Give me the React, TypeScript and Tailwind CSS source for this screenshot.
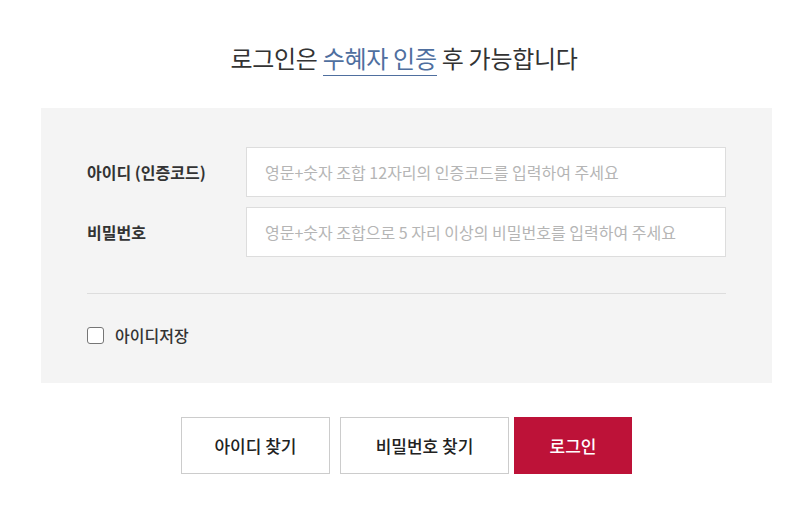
import React from 'react'

const font = { fontFamily: '"Noto Sans CJK KR", "Noto Sans", sans-serif' }

export default function App() {
  return (
    <div className="w-[808px] h-[511px] bg-white text-[#333]" style={font}>
      {/* Title */}
      <h1 className="pt-[40px] text-center text-[24px] font-normal leading-[36px] tracking-[-0.3px] text-[#333]">
        로그인은{' '}
        <span className="text-[#4f6f9f] border-b border-[#4f6f9f]">수혜자 인증</span>{' '}
        후 가능합니다
      </h1>

      {/* Form panel */}
      <div className="ml-[41px] mr-[36px] mt-[32px] h-[275px] bg-[#f4f4f4] px-[46px] pt-[39px]">
        <div className="flex flex-col gap-[10px]">
          <div className="flex items-center">
            <label className="w-[159px] text-[16px] font-bold text-[#333]">아이디 (인증코드)</label>
            <input
              className="h-[50px] flex-1 border border-[#dddddd] bg-white px-[18px] text-[16px] text-[#333] outline-none placeholder:text-[#b5b5b5]"
              placeholder="영문+숫자 조합 12자리의 인증코드를 입력하여 주세요"
            />
          </div>
          <div className="flex items-center">
            <label className="w-[159px] text-[16px] font-bold text-[#333]">비밀번호</label>
            <input
              type="password"
              className="h-[50px] flex-1 border border-[#dddddd] bg-white px-[18px] text-[16px] text-[#333] outline-none placeholder:text-[#b5b5b5]"
              placeholder="영문+숫자 조합으로 5 자리 이상의 비밀번호를 입력하여 주세요"
            />
          </div>
        </div>

        <div className="mt-[36px] border-t border-[#dddddd]" />

        <label className="mt-[29px] flex items-center gap-[11px]">
          <span className="h-[17px] w-[17px] rounded-[3px] border border-[#767676] bg-white" />
          <span className="text-[16px] font-medium text-[#333]">아이디저장</span>
        </label>
      </div>

      {/* Buttons */}
      <div className="mt-[34px] flex justify-center gap-[10px] pl-[5px]">
        <button className="h-[57px] w-[149px] border border-[#cccccc] bg-white text-[17px] font-medium text-[#222]">
          아이디 찾기
        </button>
        <button className="h-[57px] w-[169px] border border-[#cccccc] bg-white text-[17px] font-medium text-[#222]">
          비밀번호 찾기
        </button>
        <button className="-ml-[5px] h-[57px] w-[118px] bg-[#bd1238] text-[17px] font-medium text-white">
          로그인
        </button>
      </div>
    </div>
  )
}
